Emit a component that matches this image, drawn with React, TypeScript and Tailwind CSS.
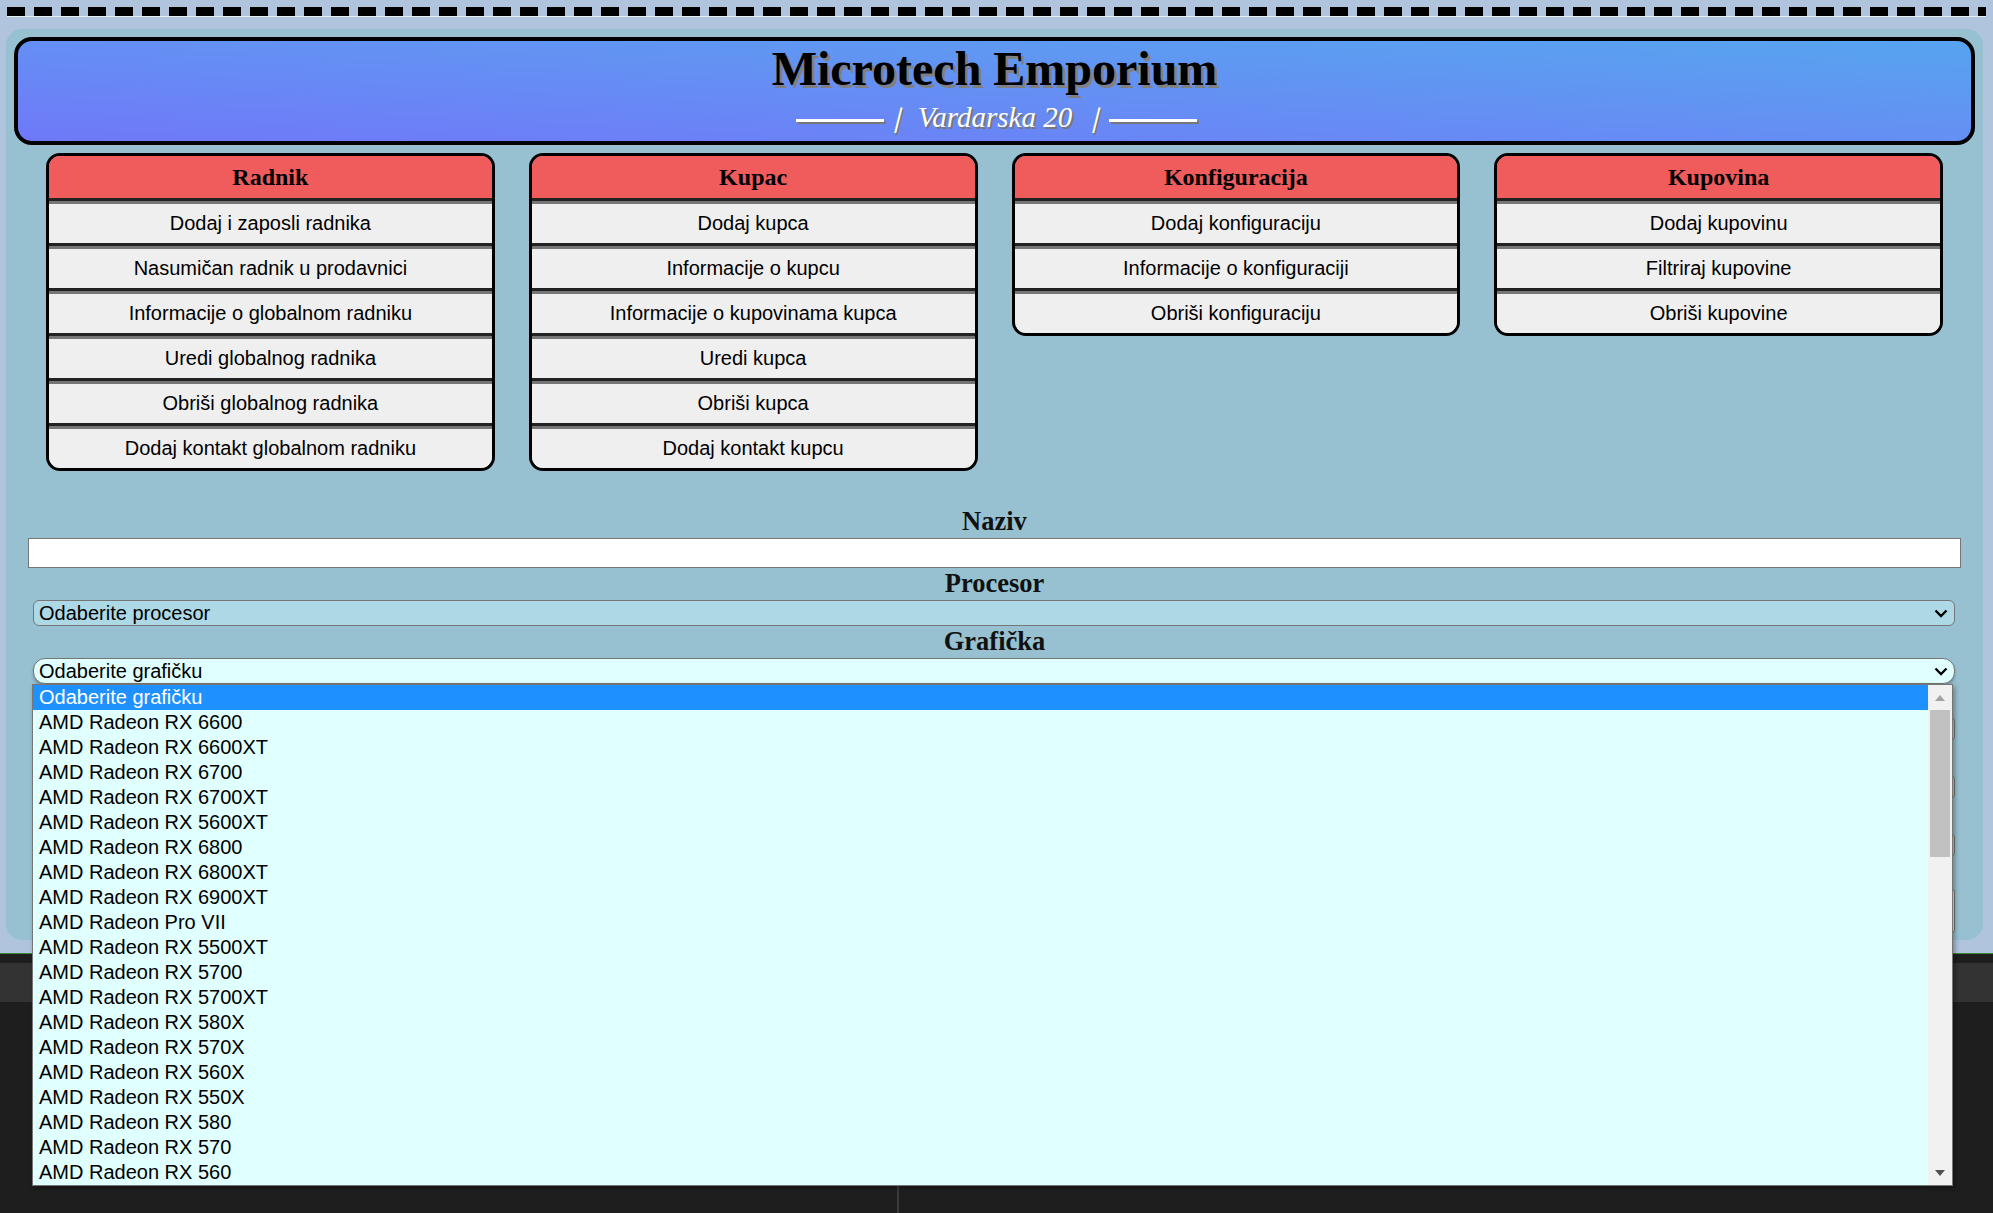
import React from 'react';

const cards = [
  {
    title: 'Radnik',
    items: [
      'Dodaj i zaposli radnika',
      'Nasumičan radnik u prodavnici',
      'Informacije o globalnom radniku',
      'Uredi globalnog radnika',
      'Obriši globalnog radnika',
      'Dodaj kontakt globalnom radniku',
    ],
  },
  {
    title: 'Kupac',
    items: [
      'Dodaj kupca',
      'Informacije o kupcu',
      'Informacije o kupovinama kupca',
      'Uredi kupca',
      'Obriši kupca',
      'Dodaj kontakt kupcu',
    ],
  },
  {
    title: 'Konfiguracija',
    items: ['Dodaj konfiguraciju', 'Informacije o konfiguraciji', 'Obriši konfiguraciju'],
  },
  {
    title: 'Kupovina',
    items: ['Dodaj kupovinu', 'Filtriraj kupovine', 'Obriši kupovine'],
  },
];

const gpus = [
  'Odaberite grafičku',
  'AMD Radeon RX 6600',
  'AMD Radeon RX 6600XT',
  'AMD Radeon RX 6700',
  'AMD Radeon RX 6700XT',
  'AMD Radeon RX 5600XT',
  'AMD Radeon RX 6800',
  'AMD Radeon RX 6800XT',
  'AMD Radeon RX 6900XT',
  'AMD Radeon Pro VII',
  'AMD Radeon RX 5500XT',
  'AMD Radeon RX 5700',
  'AMD Radeon RX 5700XT',
  'AMD Radeon RX 580X',
  'AMD Radeon RX 570X',
  'AMD Radeon RX 560X',
  'AMD Radeon RX 550X',
  'AMD Radeon RX 580',
  'AMD Radeon RX 570',
  'AMD Radeon RX 560',
];

const Chevron = () => (
  <svg width="14" height="9" viewBox="0 0 14 9" className="mr-[6px] shrink-0">
    <path d="M1.5 1.5 L7 7 L12.5 1.5" fill="none" stroke="#000" strokeWidth="2.3" />
  </svg>
);

const Card = ({ title, items }: { title: string; items: string[] }) => (
  <div className="flex-1 overflow-hidden rounded-[14px] border-[3px] border-black">
    <div className="flex h-[45px] items-center justify-center border-b-[3px] border-[#222] bg-[#f05b5b] font-['Liberation_Serif','Times_New_Roman',serif] text-[24px] font-bold text-black">
      {title}
    </div>
    {items.map((item, i) =>
      i < items.length - 1 ? (
        <button
          key={item}
          className="flex h-[45px] w-full items-center justify-center border-t-[3px] border-b-[3px] border-t-[#767676] border-b-[#222] bg-[#efefef] pb-[2px] text-[20px] text-black"
        >
          {item}
        </button>
      ) : (
        <button
          key={item}
          className="flex h-[42px] w-full items-center justify-center border-t-[3px] border-t-[#767676] bg-[#efefef] pb-[2px] text-[20px] text-black"
        >
          {item}
        </button>
      )
    )}
  </div>
);

const Label = ({ children, h = 'h-[32px]' }: { children: React.ReactNode; h?: string }) => (
  <div
    className={`${h} flex items-center justify-center font-['Liberation_Serif','Times_New_Roman',serif] text-[26.5px] font-bold text-[#111]`}
  >
    {children}
  </div>
);

const Dropdown = () => (
  <div className="absolute left-[-1px] right-[2px] top-full z-20 flex h-[502px] border border-[#767676] bg-[#e0ffff] shadow-[2px_2px_5px_rgba(0,0,0,0.35)]">
    <div className="flex-1">
      {gpus.map((g, i) => (
        <div
          key={g}
          className={
            i === 0
              ? 'h-[25px] bg-[#1e90ff] pl-[6px] text-[20px] leading-[24px] text-white'
              : 'h-[25px] pl-[6px] text-[20px] leading-[24px] text-black'
          }
        >
          {g}
        </div>
      ))}
    </div>
    <div className="flex w-[24px] flex-col bg-[#f1f1f1]">
      <div className="flex h-[25px] items-center justify-center">
        <svg width="10" height="6" viewBox="0 0 10 6">
          <path d="M0 6 L5 0 L10 6 Z" fill="#a3a3a3" />
        </svg>
      </div>
      <div className="mx-[2px] h-[147px] bg-[#c1c1c1]" />
      <div className="flex-1" />
      <div className="flex h-[25px] items-center justify-center">
        <svg width="10" height="6" viewBox="0 0 10 6">
          <path d="M0 0 L10 0 L5 6 Z" fill="#505050" />
        </svg>
      </div>
    </div>
  </div>
);

// fields that sit under the open list; only their right edges peek out
const HiddenSelect = () => (
  <div className="ml-[5px] mr-[6px] flex h-[26px] items-center rounded-[6px] border border-[#767676] bg-[#add8e6]" />
);

const Line = () => <span className="mt-[5px] inline-block h-[3px] w-[88px] bg-white shadow-[2px_2px_0_#777]" />;

export default function App() {
  return (
    <div className="min-h-screen bg-[#1e1e1e] font-['Liberation_Sans',Arial,sans-serif]">
      <div className="bg-[#b0c4de] pt-[7px] pb-[13px]">
        <div className="mx-[7px] h-[10px] border-b border-[#e8eef6] bg-[repeating-linear-gradient(90deg,#000_0px,#000_18px,transparent_18px,transparent_27px)]" />

        <main className="ml-[6px] mr-[10px] mt-[12px] rounded-[16px] bg-[#97c1d1] pt-[8px] pb-[7px]">
          <header className="mx-[8px] rounded-[18px] border-4 border-black bg-linear-to-tr from-[#6f78f8] to-[#56a4ef] pb-[7px] text-center font-['Liberation_Serif','Times_New_Roman',serif]">
            <h1 className="text-[48px] font-bold leading-[55px] text-black [text-shadow:3px_3px_0_#808080]">
              Microtech Emporium
            </h1>
            <div className="mt-[6px] flex h-[32px] items-center justify-center pl-[4px] text-[28px] italic text-white [text-shadow:2px_2px_0_#777]">
              <Line />
              <span className="ml-[12px] inline-block -skew-x-[14deg] font-bold">|</span>
              <span className="ml-[16px] text-[29px]">Vardarska 20</span>
              <span className="ml-[22px] inline-block -skew-x-[14deg] font-bold">|</span>
              <span className="ml-[9px] flex">
                <Line />
              </span>
            </div>
          </header>

          <div className="mt-[8px] flex items-start gap-[34px] px-[40px]">
            {cards.map((c) => (
              <Card key={c.title} title={c.title} items={c.items} />
            ))}
          </div>

          <div className="mt-[34px] px-[22px]">
            <Label h="h-[33px]">Naziv</Label>
            <input className="block h-[30px] w-full border border-[#767676] bg-white px-[4px] text-[20px]" />

            <Label>Procesor</Label>
            <div className="ml-[5px] mr-[6px] flex h-[26px] items-center rounded-[6px] border border-[#767676] bg-[#add8e6] pl-[5px] text-[20px] text-black">
              <span className="flex-1">Odaberite procesor</span>
              <Chevron />
            </div>

            <Label>Grafička</Label>
            <div className="relative ml-[5px] mr-[6px]">
              <div className="flex h-[26px] items-center rounded-[12px] border border-[#767676] bg-[#e0ffff] pl-[5px] text-[20px] text-black shadow-[0_2px_3px_rgba(0,0,0,0.25)]">
                <span className="flex-1">Odaberite grafičku</span>
                <Chevron />
              </div>
              <Dropdown />
            </div>

            <div className="h-[32px]" />
            <HiddenSelect />
            <div className="h-[32px]" />
            <HiddenSelect />
            <div className="h-[32px]" />
            <HiddenSelect />
            <div className="h-[31px]" />
            <div className="ml-[5px] mr-[6px] h-[44px] rounded-[3px] border border-[#767676] bg-[#efefef]" />
          </div>
        </main>
      </div>

      <div className="border-t border-[#3a8a3a]">
        <div className="h-[9px]" />
        <div className="h-[39px] bg-[#333]" />
        <div className="flex h-[211px]">
          <div className="w-[899px] border-r-2 border-[#3c3c3c]" />
        </div>
      </div>
    </div>
  );
}
